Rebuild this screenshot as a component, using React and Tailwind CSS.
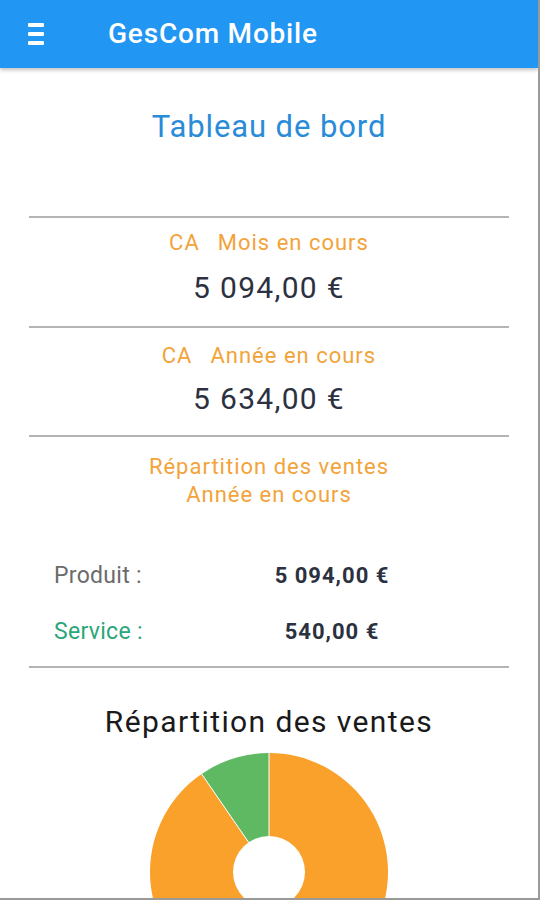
import React from "react";

function Pie() {
  const cx = 120, cy = 120, R = 119;
  const frac = 540 / 5634;
  const a = frac * 2 * Math.PI;
  const gx = cx - R * Math.sin(a);
  const gy = cy - R * Math.cos(a);
  const greenPath = `M${cx} ${cy} L${cx} ${cy - R} A${R} ${R} 0 0 0 ${gx} ${gy} Z`;
  const orangePath = `M${cx} ${cy} L${gx} ${gy} A${R} ${R} 0 1 0 ${cx} ${cy - R} Z`;
  return (
    <svg width="240" height="240" viewBox="0 0 240 240">
      <path d={orangePath} fill="#f9a12b" />
      <path d={greenPath} fill="#5fb862" />
      <line x1={cx} y1={cy} x2={cx} y2={cy - R} stroke="#ffffff" strokeWidth="1" />
      <line x1={cx} y1={cy} x2={gx} y2={gy} stroke="#ffffff" strokeWidth="1" />
      <circle cx={cx} cy={cy} r="36" fill="#ffffff" />
    </svg>
  );
}

export default function App() {
  return (
    <div
      className="w-[540px] h-[900px] overflow-hidden bg-white border-r-2 border-b-2 border-[#9a9a9a] relative"
      style={{ fontFamily: "Roboto, 'Noto Sans', sans-serif" }}
    >
      <header className="h-[68px] bg-[#2196f3] flex items-center shadow-[0_2px_4px_rgba(0,0,0,0.25)] relative z-10">
        <div className="ml-[28px] w-[16px] flex flex-col gap-[5px]">
          <span className="block h-[4px] bg-white rounded-[1px]" />
          <span className="block h-[4px] bg-white rounded-[1px]" />
          <span className="block h-[4px] bg-white rounded-[1px]" />
        </div>
        <div className="ml-[64px] text-white font-medium text-[28px] leading-none tracking-[0.8px]">GesCom Mobile</div>
      </header>

      <h1 className="mt-[42px] text-center text-[#2a8cd8] text-[31px] leading-[34px] tracking-[0.9px]">Tableau de bord</h1>

      <div className="mx-[29px] mt-[72px] h-[2px] bg-[#b4b4b4]" />
      <div className="mt-[12px] flex justify-center gap-[18px] text-[#f2a33a] text-[22px] leading-[26px] tracking-[1px]">
        <span>CA</span>
        <span>Mois en cours</span>
      </div>
      <div className="mt-[15px] text-center text-[#2b3140] text-[30px] leading-[34px] tracking-[1.3px]">5 094,00 €</div>

      <div className="mx-[29px] mt-[21px] h-[2px] bg-[#b4b4b4]" />
      <div className="mt-[15px] flex justify-center gap-[18px] text-[#f2a33a] text-[22px] leading-[26px] tracking-[1px]">
        <span>CA</span>
        <span>Année en cours</span>
      </div>
      <div className="mt-[13px] text-center text-[#2b3140] text-[30px] leading-[34px] tracking-[1.3px]">5 634,00 €</div>

      <div className="mx-[29px] mt-[19px] h-[2px] bg-[#b4b4b4]" />
      <div className="mt-[16px] text-center text-[#f2a33a] text-[22px] leading-[28px] tracking-[1px]">
        <div>Répartition des ventes</div>
        <div>Année en cours</div>
      </div>

      <div className="mt-[55px] flex items-center text-[23px] leading-[24px]">
        <div className="pl-[54px] w-[252px] text-[#6b6b6b] tracking-[0.3px]">Produit :</div>
        <div className="w-[160px] text-center font-bold text-[#2b3140] text-[22px] tracking-[1px]">5 094,00 €</div>
      </div>
      <div className="mt-[32px] flex items-center text-[23px] leading-[24px]">
        <div className="pl-[54px] w-[252px] text-[#2aa67a] tracking-[0.3px]">Service :</div>
        <div className="w-[160px] text-center font-bold text-[#2b3140] text-[22px] tracking-[1px]">540,00 €</div>
      </div>

      <div className="mx-[29px] mt-[22px] h-[2px] bg-[#b4b4b4]" />
      <h2 className="mt-[36px] text-center text-[#1a1a1a] text-[30px] leading-[36px] tracking-[1.4px]">Répartition des ventes</h2>
      <div className="mt-[12px] flex justify-center">
        <Pie />
      </div>
    </div>
  );
}
